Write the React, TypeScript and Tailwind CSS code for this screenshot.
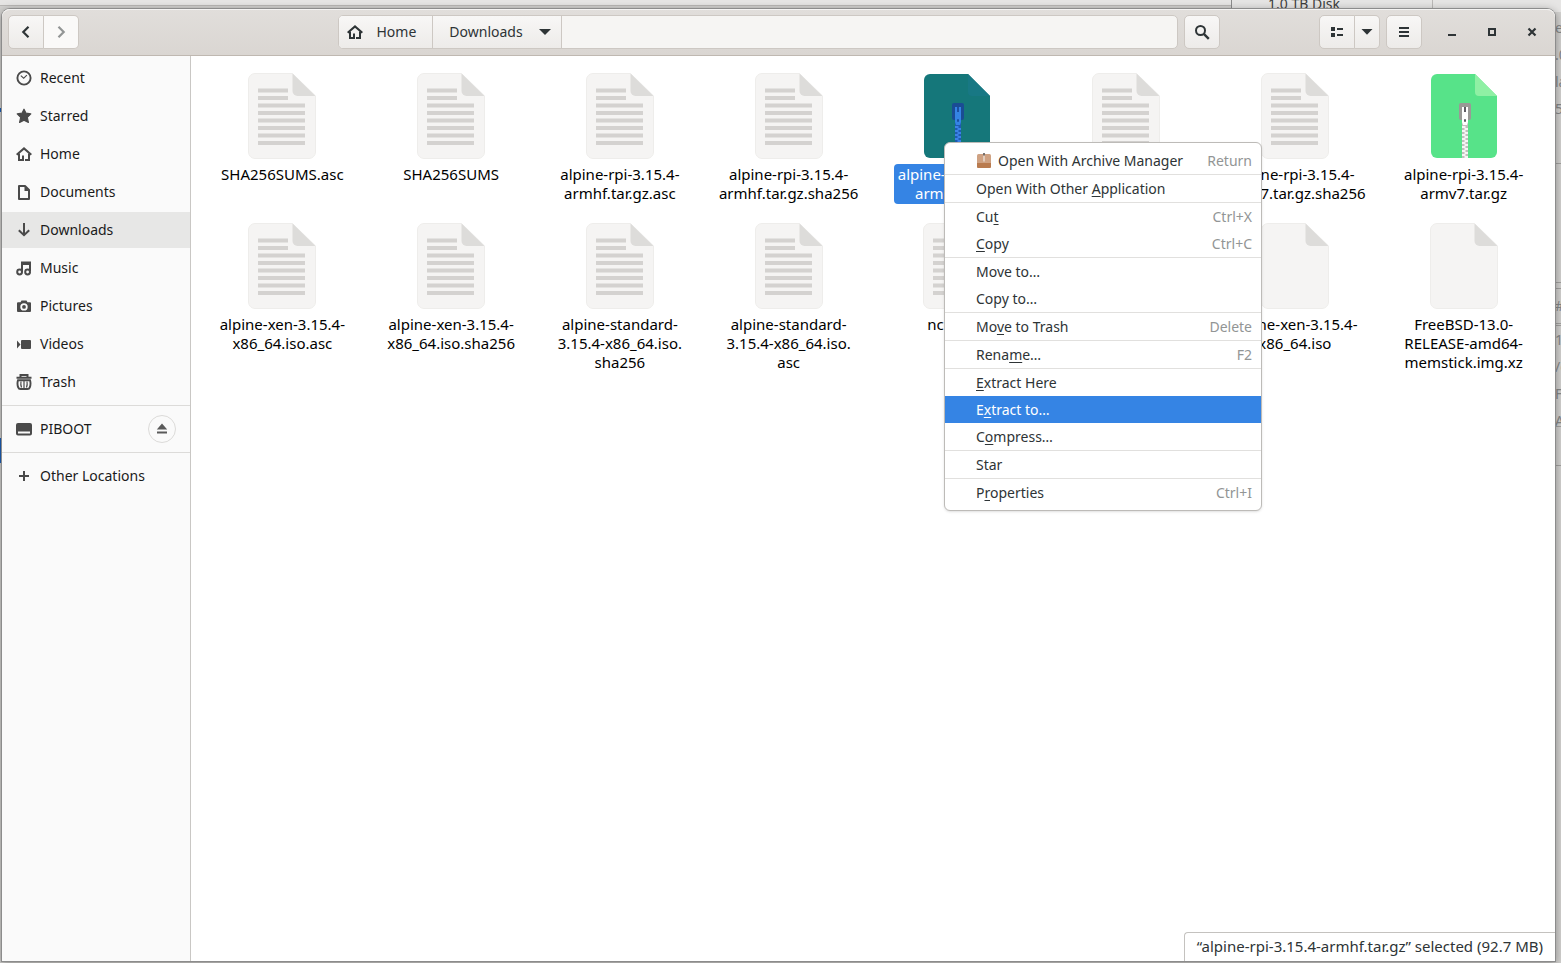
import clsx from "clsx";
import type { ReactNode } from "react";

type FileKind = "text" | "blank" | "archive";

type FileItem = {
	lines: string[];
	kind: FileKind;
	selected?: boolean;
};

const files: FileItem[] = [
	{ lines: ["SHA256SUMS.asc"], kind: "text" },
	{ lines: ["SHA256SUMS"], kind: "text" },
	{ lines: ["alpine-rpi-3.15.4-", "armhf.tar.gz.asc"], kind: "text" },
	{ lines: ["alpine-rpi-3.15.4-", "armhf.tar.gz.sha256"], kind: "text" },
	{
		lines: ["alpine-rpi-3.15.4-", "armhf.tar.gz"],
		kind: "archive",
		selected: true,
	},
	{ lines: ["alpine-rpi-3.15.4-", "armv7.tar.gz.asc"], kind: "text" },
	{ lines: ["alpine-rpi-3.15.4-", "armv7.tar.gz.sha256"], kind: "text" },
	{ lines: ["alpine-rpi-3.15.4-", "armv7.tar.gz"], kind: "archive" },
	{ lines: ["alpine-xen-3.15.4-", "x86_64.iso.asc"], kind: "text" },
	{ lines: ["alpine-xen-3.15.4-", "x86_64.iso.sha256"], kind: "text" },
	{ lines: ["alpine-standard-", "3.15.4-x86_64.iso.", "sha256"], kind: "text" },
	{ lines: ["alpine-standard-", "3.15.4-x86_64.iso.", "asc"], kind: "text" },
	{ lines: ["nco.conf"], kind: "text" },
	{ lines: ["alpine.iso"], kind: "blank" },
	{ lines: ["alpine-xen-3.15.4-", "x86_64.iso"], kind: "blank" },
	{
		lines: ["FreeBSD-13.0-", "RELEASE-amd64-", "memstick.img.xz"],
		kind: "blank",
	},
];

// "_" goes before the mnemonic letter
const menuGroups: { label: string; accel?: string; active?: boolean }[][] = [
	[{ label: "Open With Archive Manager", accel: "Return" }],
	[{ label: "Open With Other _Application" }],
	[
		{ label: "Cu_t", accel: "Ctrl+X" },
		{ label: "_Copy", accel: "Ctrl+C" },
	],
	[{ label: "Move to…" }, { label: "Copy to…" }],
	[{ label: "Mo_ve to Trash", accel: "Delete" }],
	[{ label: "Rena_me…", accel: "F2" }],
	[
		{ label: "_Extract Here" },
		{ label: "E_xtract to…", active: true },
		{ label: "C_ompress…" },
	],
	[{ label: "Star" }],
	[{ label: "P_roperties", accel: "Ctrl+I" }],
];

function Icon({ children }: { children: ReactNode }) {
	return (
		<svg
			className="size-4 shrink-0"
			viewBox="0 0 16 16"
			fill="currentColor"
			aria-hidden="true"
		>
			{children}
		</svg>
	);
}

const HomeIcon = () => (
	<Icon>
		<path
			d="M0.7 8.8 8 2.4l7.3 6.4"
			fill="none"
			stroke="currentColor"
			strokeWidth="2"
		/>
		<path
			d="M3 7.500V14h3.500M13 7.500V14H9"
			fill="none"
			stroke="currentColor"
			strokeWidth="2"
		/>
		<path d="M6 9.500h2V15H6ZM9 13h1v2H9Z" />
	</Icon>
);

const places: { name: string; icon: ReactNode }[] = [
	{
		name: "Recent",
		icon: (
			<Icon>
				<circle
					cx="8"
					cy="8"
					r="6.6"
					fill="none"
					stroke="currentColor"
					strokeWidth="1.9"
				/>
				<path
					d="M4.8 5.6 7.7 8.2l3.2-3"
					fill="none"
					stroke="currentColor"
					strokeWidth="1.1"
				/>
			</Icon>
		),
	},
	{
		name: "Starred",
		icon: (
			<Icon>
				<path
					d="M8 1.200l2 4 4.800.7-3.500 3.500 1.100 5L8 12.300l-4.400 2.100 1.100-5L1.200 5.900 6 5.200Z"
					stroke="currentColor"
					strokeWidth="1.200"
					strokeLinejoin="round"
				/>
			</Icon>
		),
	},
	{ name: "Home", icon: <HomeIcon /> },
	{
		name: "Documents",
		icon: (
			<Icon>
				<path
					d="M3 2h6l4 4v9H3Z"
					fill="none"
					stroke="currentColor"
					strokeWidth="2"
					strokeLinejoin="round"
				/>
				<path d="M8.5 2v5H13Z" />
			</Icon>
		),
	},
	{
		name: "Downloads",
		icon: (
			<Icon>
				<path
					d="M8 1v12M2.8 8.2 8 13.2l5.2-5"
					fill="none"
					stroke="currentColor"
					strokeWidth="2"
				/>
			</Icon>
		),
	},
	{
		name: "Music",
		icon: (
			<Icon>
				<path
					d="M6 12V2.500h8V11M6 4h8"
					fill="none"
					stroke="currentColor"
					strokeWidth="2"
				/>
				<circle cx="3.6" cy="12" r="2.4" fill="none" stroke="currentColor" strokeWidth="2" />
				<circle cx="11.6" cy="12" r="2.4" fill="none" stroke="currentColor" strokeWidth="2" />
			</Icon>
		),
	},
	{
		name: "Pictures",
		icon: (
			<Icon>
				<path
					fillRule="evenodd"
					d="M5.5 2.5h5l1 1.7H14a1 1 0 0 1 1 1V13a1 1 0 0 1-1 1H2a1 1 0 0 1-1-1V5.2a1 1 0 0 1 1-1h2.500ZM8 5.200a3.700 3.700 0 1 0 0 7.400 3.700 3.700 0 0 0 0-7.400Z"
				/>
				<circle cx="8" cy="8.900" r="1.900" />
			</Icon>
		),
	},
	{
		name: "Videos",
		icon: (
			<Icon>
				<rect x="5" y="4" width="10" height="9" rx="1" />
				<path d="M1 4.500v8l3.500-4Z" />
			</Icon>
		),
	},
	{
		name: "Trash",
		icon: (
			<Icon>
				<path
					d="M.5 3.800h15M4.500 3.200V1h7v2.200"
					fill="none"
					stroke="currentColor"
					strokeWidth="2"
				/>
				<path
					d="M2 6.200c-.8 2.500-.5 5.300.2 7.200q.5 1.600 2.300 1.600h7q1.800 0 2.300-1.600c.7-1.900 1-4.700.2-7.200Z"
					fill="none"
					stroke="currentColor"
					strokeWidth="1.900"
				/>
				<path
					d="M5 7.500q-.6 3 .5 6M8 7v7M11 7.500q.6 3-.5 6"
					fill="none"
					stroke="currentColor"
					strokeWidth="1.200"
				/>
			</Icon>
		),
	},
];

function SidebarRow({
	name,
	icon,
	active,
}: {
	name: string;
	icon: ReactNode;
	active?: boolean;
}) {
	return (
		<a
			href="#"
			className={clsx(
				"flex h-9 flex-1 items-center gap-2 pl-3.5 text-[#1b1b1b]",
				active && "bg-[#e7e7e6]",
			)}
		>
			<span className="text-[#4a4a4a]">{icon}</span>
			{name}
		</a>
	);
}

function Zipper({ selected }: { selected?: boolean }) {
	const slab = selected ? "#1a4c94" : "#9a9996";
	const tab = selected ? "#3584e4" : "#ffffff";
	const dark = selected ? "#1c4fa0" : "#5e5c64";
	const tooth = selected ? "#3b82e8" : "#f6f5f4";
	const gap = selected ? "#1f5bb0" : "#c0bfbc";
	return (
		<g>
			<rect x="32" y="38" width="6" height="47" fill={gap} />
			{[0, 1, 2, 3, 4, 5, 6, 7].map((i) => (
				<g key={i} fill={tooth}>
					<rect x="32" y={53 + i * 4} width="3.500" height="2" />
					<rect x="34.500" y={55 + i * 4} width="3.500" height="2" />
				</g>
			))}
			<rect x="29" y="30" width="12" height="17" rx="2" fill={slab} />
			<path d="M32 34h6v15l-1 3h-4l-1-3Z" fill={tab} />
			<rect x="34" y="34" width="2" height="5" fill={dark} />
			<rect x="34" y="46" width="2" height="3" rx="1" fill={dark} />
		</g>
	);
}

function FileIcon({ kind, selected }: { kind: FileKind; selected?: boolean }) {
	if (kind === "archive") {
		return (
			<svg width="68" height="86" viewBox="0 0 68 86" aria-hidden="true">
				<path
					d="M7 1H45L67 23V79a6 6 0 0 1-6 6H7a6 6 0 0 1-6-6V7a6 6 0 0 1 6-6Z"
					fill={selected ? "#15777a" : "#57e389"}
				/>
				<path
					d="M45 1V19a4 4 0 0 0 4 4H67Z"
					fill={selected ? "#187884" : "#8ff0a4"}
				/>
				<Zipper selected={selected} />
			</svg>
		);
	}
	return (
		<svg width="68" height="86" viewBox="0 0 68 86" aria-hidden="true">
			<path
				d="M7 .5H44.500L67.500 23V79a6.500 6.500 0 0 1-6.500 6.500H7A6.500 6.500 0 0 1 .5 79V7A6.500 6.500 0 0 1 7 .5Z"
				fill="#f5f4f3"
				stroke="#eeedeb"
			/>
			<path d="M44.500 .5V18a5 5 0 0 0 5 5H67.500Z" fill="#dddcda" />
			{kind === "text" &&
				[0, 1, 2, 3, 4, 5, 6, 7].map((i) => (
					<rect
						key={i}
						x="10"
						y={15.5 + i * 7.5}
						width={i < 2 ? 30 : 47}
						height="4"
						fill="#d4d2d0"
					/>
				))}
		</svg>
	);
}

function FileTile({ file }: { file: FileItem }) {
	return (
		<button type="button" className="flex flex-col items-center gap-[5px]">
			<FileIcon kind={file.kind} selected={file.selected} />
			<span
				className={clsx(
					"rounded px-1 pt-px pb-px text-[15px] leading-[19px]",
					file.selected ? "bg-[#3584e4] text-white" : "text-black",
				)}
			>
				{file.lines.map((line) => (
					<span key={line} className="block whitespace-nowrap">
						{line}
					</span>
				))}
			</span>
		</button>
	);
}

function MenuLabel({ label }: { label: string }) {
	const at = label.indexOf("_");
	if (at < 0) return <span>{label}</span>;
	return (
		<span>
			{label.slice(0, at)}
			<span className="underline decoration-1 underline-offset-2">
				{label[at + 1]}
			</span>
			{label.slice(at + 2)}
		</span>
	);
}

function ContextMenu() {
	return (
		<div
			role="menu"
			className="absolute top-[133px] left-[942px] w-[318px] rounded-md border border-[#bdbbb8] bg-white py-1 text-sm text-[#2e3436] shadow-sm"
		>
			{menuGroups.map((group, i) => (
				<div
					key={group[0].label}
					className={clsx(i > 0 && "border-t border-[#e1e0de]")}
				>
					{group.map((item) => (
						<button
							key={item.label}
							type="button"
							role="menuitem"
							className={clsx(
								"flex h-[27px] w-full items-center justify-between pr-[9px] pl-[31px]",
								item.active && "bg-[#3584e4] text-white",
							)}
						>
							<span className="flex items-center gap-1.5">
								{i === 0 && (
									<Icon>
										<rect x="1" y="1" width="14" height="14" rx="1.500" fill="#cfa283" />
										<path d="M1 10h14v3.500a1.500 1.500 0 0 1-1.500 1.500h-11A1.500 1.500 0 0 1 1 13.500Z" fill="#b97b4f" />
										<path d="M7 1h2v7.500H7Z" fill="#e3cdbd" />
										<path d="M7.200 0h1.600v2.500H7.200Z" fill="#5b5450" />
									</Icon>
								)}
								<MenuLabel label={item.label} />
							</span>
							{item.accel && <span className="text-[#929595]">{item.accel}</span>}
						</button>
					))}
				</div>
			))}
		</div>
	);
}

const raised =
	"border border-[#cdc8c3] bg-linear-to-b from-[#f8f7f6] to-[#edebe9]";

function HeaderBar() {
	return (
		<header className="flex h-[47px] items-center rounded-t-lg border-b border-[#bfb8b1] bg-linear-to-b from-[#e1dedb] to-[#dad6d2] px-1.5 text-[#2e3436] shadow-[inset_0_1px_#f4f3f2]">
			<div className="flex flex-1">
				<button
					type="button"
					aria-label="Back"
					className={clsx(raised, "flex h-[34px] w-9 items-center justify-center rounded-l-[5px]")}
				>
					<Icon>
						<path d="M10.500 2.800 5.300 8l5.200 5.200" fill="none" stroke="currentColor" strokeWidth="2.200" />
					</Icon>
				</button>
				<button
					type="button"
					aria-label="Forward"
					className="flex h-[34px] w-[35px] items-center justify-center rounded-r-[5px] border border-l-0 border-[#cdc8c3] bg-[#faf9f8] text-[#929595]"
				>
					<Icon>
						<path d="M5.500 2.800 10.700 8l-5.200 5.200" fill="none" stroke="currentColor" strokeWidth="2.200" />
					</Icon>
				</button>
			</div>

			<div className="flex w-[882px] gap-1.5">
				<nav className="flex h-[34px] flex-1 overflow-hidden rounded-[5px] border border-[#cdc8c3] bg-[#f6f5f3] text-sm">
					<button
						type="button"
						className="flex items-center gap-3.5 border-r border-[#cdc8c3] bg-linear-to-b from-[#f8f7f6] to-[#edebe9] pr-4 pl-2"
					>
						<HomeIcon />
						Home
					</button>
					<button
						type="button"
						className="flex items-center gap-3.5 border-r border-[#cdc8c3] bg-linear-to-b from-[#f8f7f6] to-[#edebe9] pr-2 pl-4"
					>
						Downloads
						<Icon>
							<path d="M2 5h12l-6 6Z" />
						</Icon>
					</button>
				</nav>
				<button
					type="button"
					aria-label="Search"
					className={clsx(raised, "flex h-[34px] w-9 items-center justify-center rounded-[5px]")}
				>
					<Icon>
						<circle cx="6.500" cy="6.500" r="4.500" fill="none" stroke="currentColor" strokeWidth="2" />
						<path d="m9.800 9.800 5 5" fill="none" stroke="currentColor" strokeWidth="2.400" />
					</Icon>
				</button>
			</div>

			<div className="-mr-[3px] flex flex-1 items-center justify-end pl-[3px]">
				<button
					type="button"
					aria-label="List view"
					className={clsx(raised, "flex h-[34px] w-9 items-center justify-center rounded-l-[5px]")}
				>
					<Icon>
						<path d="M2 3h4v4H2ZM2 9h4v4H2ZM8 4h6v2H8ZM8 10h6v2H8Z" />
					</Icon>
				</button>
				<button
					type="button"
					aria-label="View options"
					className={clsx(raised, "flex h-[34px] w-[25px] items-center justify-center rounded-r-[5px] border-l-0")}
				>
					<Icon>
						<path d="M2.500 5h11L8 10.800Z" />
					</Icon>
				</button>
				<button
					type="button"
					aria-label="Menu"
					className={clsx(raised, "ml-1.5 flex h-[34px] w-9 items-center justify-center rounded-[5px]")}
				>
					<Icon>
						<path d="M3 3h10v2H3ZM3 7h10v2H3ZM3 11h10v2H3Z" />
					</Icon>
				</button>
				<div className="ml-2.5 flex">
					<button type="button" aria-label="Minimize" className="flex size-10 items-center justify-center">
						<Icon>
							<path d="M4 10h8v2H4Z" />
						</Icon>
					</button>
					<button type="button" aria-label="Maximize" className="flex size-10 items-center justify-center">
						<Icon>
							<path d="M5 5h6v6H5Z" fill="none" stroke="currentColor" strokeWidth="2" />
						</Icon>
					</button>
					<button type="button" aria-label="Close" className="flex size-10 items-center justify-center">
						<Icon>
							<path d="m4.500 4.500 7 7m0-7-7 7" fill="none" stroke="currentColor" strokeWidth="2.200" />
						</Icon>
					</button>
				</div>
			</div>
		</header>
	);
}

function Sidebar() {
	return (
		<aside className="flex w-[189px] shrink-0 flex-col gap-0.5 border-r border-[#c9c7c4] bg-[#fafafa] pt-1 text-sm">
			{places.map((p) => (
				<div key={p.name} className="flex">
					<SidebarRow {...p} active={p.name === "Downloads"} />
				</div>
			))}
			<hr className="my-[3px] border-[#dcdbd9]" />
			<div className="flex items-center pr-3.5">
				<SidebarRow
					name="PIBOOT"
					icon={
						<Icon>
							<path
								fillRule="evenodd"
								d="M2 2h12a2 2 0 0 1 2 2v8.500a2 2 0 0 1-2 2H2a2 2 0 0 1-2-2V4a2 2 0 0 1 2-2ZM2 10.500v2h12v-2Z"
							/>
						</Icon>
					}
				/>
				<button
					type="button"
					aria-label="Eject PIBOOT"
					className="flex size-7 items-center justify-center rounded-full border border-[#dcdbd9] text-[#5a5a5a]"
				>
					<Icon>
						<path d="M8 2.500 13.200 8.500H2.800ZM3 10.500h10v2H3Z" />
					</Icon>
				</button>
			</div>
			<hr className="my-[3px] border-[#dcdbd9]" />
			<div className="flex">
				<SidebarRow
					name="Other Locations"
					icon={
						<Icon>
							<path d="M7 3h2v4h4v2H9v4H7V9H3V7h4Z" />
						</Icon>
					}
				/>
			</div>
		</aside>
	);
}

// Slivers of the windows that sit below this one
function Backdrop() {
	return (
		<div
			aria-hidden="true"
			className="absolute inset-0 overflow-hidden bg-[#d2d1cf] text-sm text-[#85888a]"
		>
			<div className="box-content h-[5px] border-b border-[#bab8b6] bg-[#e6e5e4]" />
			<div className="absolute top-0 right-0 flex h-3 w-[330px] border-l border-[#8b8b8b] bg-[#e6e5e4]">
				<span className="-mt-2 w-[201px] border-r border-[#bab8b6] pl-9 leading-6 text-[#3d3d3d]">
					1.0 TB Disk
				</span>
			</div>
			<div className="absolute top-[14px] right-0 w-[6px] overflow-hidden leading-[27px]">
				<p>e</p>
				<p>.0</p>
				<p>la</p>
				<p>5</p>
			</div>
			<div className="absolute top-[163px] right-0 h-[120px] w-[6px] border-y border-[#a3a2a0]" />
			<div className="absolute top-[288px] right-0 w-[6px] overflow-hidden border-y border-[#a3a2a0] leading-[34px]">
				#
			</div>
			<div className="absolute top-[325px] right-0 w-[6px] overflow-hidden border-t border-[#a3a2a0] leading-[27px]">
				<p>1</p>
				<p>/o</p>
				<p>F</p>
				<p>Ar</p>
			</div>
			<div className="absolute top-[426px] right-0 h-10 w-[6px] border-y border-[#a3a2a0]" />
			<div className="absolute top-[438px] left-0 h-[25px] w-0.5 bg-[#1c5fb8]" />
			<div className="absolute top-[108px] left-0 h-1 w-0.5 bg-[#1c5fb8]" />
		</div>
	);
}

export default function App() {
	return (
		<div className="relative flex min-h-screen pt-[9px] pr-1.5 pb-0.5 pl-0.5 font-['Noto_Sans',sans-serif]">
			<Backdrop />
			<div className="relative flex flex-1 flex-col rounded-t-lg bg-white shadow-[0_0_0_1px_#8c8c8c,0_2px_8px_1px_rgba(0,0,0,0.35)]">
				<HeaderBar />
				<div className="flex flex-1">
					<Sidebar />
					<main className="grid flex-1 grid-cols-8 content-start items-start gap-y-[19px] px-[7px] pt-[17px]">
						{files.map((f) => (
							<FileTile key={f.lines.join("")} file={f} />
						))}
					</main>
				</div>
				<ContextMenu />
				<footer className="absolute right-0 bottom-0 rounded-tl border-t border-l border-[#c4c2bf] bg-white px-3 pt-[3px] pb-[5px] text-[15px] leading-5 text-[#2e3436]">
					“alpine-rpi-3.15.4-armhf.tar.gz” selected (92.7 MB)
				</footer>
			</div>
		</div>
	);
}
